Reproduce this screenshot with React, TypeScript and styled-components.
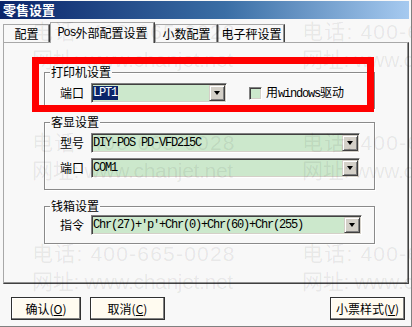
import React from 'react'
import styled, { createGlobalStyle } from 'styled-components'

const GlobalStyle = createGlobalStyle`
  html, body {
    margin: 0;
    padding: 0;
    background: #f8f8f8;
  }
  body {
    font-family: "Noto Sans CJK SC", "Noto Sans", sans-serif;
    font-size: 12px;
    color: #000;
  }
`

const Window = styled.div`
  position: relative;
  width: 412px;
  height: 327px;
  box-sizing: border-box;
  padding: 1px 2px 0 0;
  background: #f8f8f8;
  border-right: 1px solid #808080;
  border-bottom: 1px solid #808080;
  display: flex;
  flex-direction: column;
  overflow: hidden;
`

const TitleBar = styled.div`
  height: 18px;
  padding-left: 3px;
  background: linear-gradient(to right, #0a246a 0%, #3a6ea5 55%, #a6caf0 100%);
  color: #fff;
  font-weight: bold;
  font-size: 13px;
  line-height: 18px;
`

const TabStrip = styled.div`
  height: 23px;
  padding-left: 3px;
  display: flex;
  align-items: flex-end;
`

const Tab = styled.div<{ $w: number; $active?: boolean }>`
  position: relative;
  z-index: ${p => (p.$active ? 2 : 1)};
  width: ${p => p.$w}px;
  height: ${p => (p.$active ? 21 : 18)}px;
  margin-bottom: ${p => (p.$active ? -1 : 0)}px;
  box-sizing: border-box;
  background: #f8f8f8;
  border-top: 1px solid #a8a8a8;
  border-left: 1px solid #a8a8a8;
  border-right: 1px solid #404040;
  box-shadow: inset -1px 0 #909090;
  display: flex;
  align-items: center;
  justify-content: center;
  line-height: 16px;
  padding-top: ${p => (p.$active ? 0 : 1)}px;
`

const Panel = styled.div`
  margin-left: 3px;
  width: 406px;
  height: 242px;
  box-sizing: border-box;
  border: 1px solid;
  border-color: #a8a8a8 #404040 #404040 #a8a8a8;
  box-shadow: inset -1px -1px #909090;
  padding: 29px 0 0 40px;
  display: flex;
  flex-direction: column;
`

const Group = styled.div<{ $h: number; $gap: number; $pt: number }>`
  position: relative;
  width: 331px;
  height: ${p => p.$h}px;
  margin-bottom: ${p => p.$gap}px;
  box-sizing: border-box;
  border: 1px solid #8a8a8a;
  box-shadow: inset 1px 1px #fff, 1px 1px #fff;
  padding: ${p => p.$pt}px 0 0 15px;
  display: flex;
  flex-direction: column;
  gap: 5px;
`

const Legend = styled.span`
  position: absolute;
  top: -8px;
  left: 5px;
  padding: 0 1px;
  background: #f8f8f8;
  line-height: 14px;
`

const Row = styled.div`
  display: flex;
  align-items: center;
  height: 20px;
`

const Label = styled.span`
  width: 31px;
  line-height: 20px;
`

const Combo = styled.div<{ $w: number }>`
  width: ${p => p.$w}px;
  height: 20px;
  box-sizing: border-box;
  display: flex;
  align-items: center;
  padding-left: 1px;
  background: #cce8cc;
  border: 1px solid;
  border-color: #808080 #fff #fff #808080;
  box-shadow: inset 1px 1px #404040, inset -1px -1px #d4d0c8;
  overflow: hidden;
`

const Mono = styled.span`
  font-family: "Liberation Mono", monospace;
  font-size: 12px;
  letter-spacing: -1.2px;
  white-space: pre;
`

const Selected = styled(Mono)`
  background: #0a246a;
  color: #fff;
  padding: 0 1px 0 0;
  line-height: 14px;
`

const DropBtn = styled.div`
  margin-left: auto;
  margin-right: 1px;
  flex: none;
  width: 16px;
  height: 16px;
  box-sizing: border-box;
  background: #d4d0c8;
  border: 1px solid;
  border-color: #d4d0c8 #404040 #404040 #d4d0c8;
  box-shadow: inset 1px 1px #fff, inset -1px -1px #808080;
  display: flex;
  align-items: center;
  justify-content: center;
`

const Arrow = styled.span`
  width: 0;
  height: 0;
  border-left: 3.5px solid transparent;
  border-right: 3.5px solid transparent;
  border-top: 4px solid #000;
`

const Check = styled.span`
  width: 13px;
  height: 13px;
  box-sizing: border-box;
  margin-left: 22px;
  background: #cce8cc;
  border: 1px solid;
  border-color: #808080 #fff #fff #808080;
  box-shadow: inset 1px 1px #404040, inset -1px -1px #d4d0c8;
`

const CheckText = styled.span`
  margin-left: 4px;
  line-height: 20px;
`

const Footer = styled.div`
  display: flex;
  padding: 13px 4px 0 11px;
  gap: 9px;
`

const Button = styled.button<{ $w: number; $right?: boolean }>`
  width: ${p => p.$w}px;
  height: 23px;
  margin-left: ${p => (p.$right ? 'auto' : '0')};
  padding: 0;
  box-sizing: border-box;
  background: #fffbf0;
  border: 1px solid #303030;
  box-shadow: inset -1px -1px #808080, inset 1px 1px #fff;
  font: inherit;
  color: #000;
  line-height: 20px;
`

const Key = styled.span`
  text-decoration: underline;
`

const Watermark = styled.div`
  position: absolute;
  inset: 0;
  pointer-events: none;
  overflow: hidden;
  display: grid;
  grid-template-columns: 270px 270px;
  grid-auto-rows: 111px;
  padding: 18px 0 0 32px;
  color: rgba(0, 0, 0, 0.075);
  font-size: 21px;
  z-index: 5;
`

const WmLine = styled.div<{ $ls: number }>`
  line-height: 28px;
  white-space: nowrap;
  font-family: "Liberation Sans", "Noto Sans CJK SC", sans-serif;
  letter-spacing: ${p => p.$ls}px;
`

const Highlight = styled.div`
  position: absolute;
  left: 32px;
  top: 57px;
  width: 342px;
  height: 55px;
  box-sizing: border-box;
  border: 7px solid #ff0000;
  z-index: 6;
`

const ComboBox = ({ w, children }: { w: number; children: React.ReactNode }) => (
  <Combo $w={w}>
    {children}
    <DropBtn>
      <Arrow />
    </DropBtn>
  </Combo>
)

const tiles = [0, 1, 2, 3, 4, 5]

const App = () => {
  return (
    <Window>
      <GlobalStyle />
      <TitleBar>零售设置</TitleBar>
      <TabStrip>
        <Tab $w={47}>配置</Tab>
        <Tab $w={105} $active>
          <Mono>Pos</Mono>外部配置设置
        </Tab>
        <Tab $w={63}>小数配置</Tab>
        <Tab $w={67}>电子秤设置</Tab>
      </TabStrip>
      <Panel>
        <Group $h={37} $gap={13} $pt={10}>
          <Legend>打印机设置</Legend>
          <Row>
            <Label>端口</Label>
            <ComboBox w={136}>
              <Selected>LPT1</Selected>
            </ComboBox>
            <Check />
            <CheckText>
              用<Mono>windows</Mono>驱动
            </CheckText>
          </Row>
        </Group>
        <Group $h={68} $gap={16} $pt={10}>
          <Legend>客显设置</Legend>
          <Row>
            <Label>型号</Label>
            <ComboBox w={269}>
              <Mono>DIY-POS PD-VFD215C</Mono>
            </ComboBox>
          </Row>
          <Row>
            <Label>端口</Label>
            <ComboBox w={269}>
              <Mono>COM1</Mono>
            </ComboBox>
          </Row>
        </Group>
        <Group $h={38} $gap={0} $pt={8}>
          <Legend>钱箱设置</Legend>
          <Row>
            <Label>指令</Label>
            <ComboBox w={271}>
              <Mono>Chr(27)+'p'+Chr(0)+Chr(60)+Chr(255)</Mono>
            </ComboBox>
          </Row>
        </Group>
      </Panel>
      <Footer>
        <Button $w={70}>
          确认(<Key>O</Key>)
        </Button>
        <Button $w={75}>
          取消(<Key>C</Key>)
        </Button>
        <Button $w={75} $right>
          小票样式(<Key>V</Key>)
        </Button>
      </Footer>
      <Watermark>
        {tiles.map(i => (
          <div key={i}>
            <WmLine $ls={1.2}>电话: 400-665-0028</WmLine>
            <WmLine $ls={-0.3}>网址: www.chanjet.net</WmLine>
          </div>
        ))}
      </Watermark>
      <Highlight />
    </Window>
  )
}

export default App
